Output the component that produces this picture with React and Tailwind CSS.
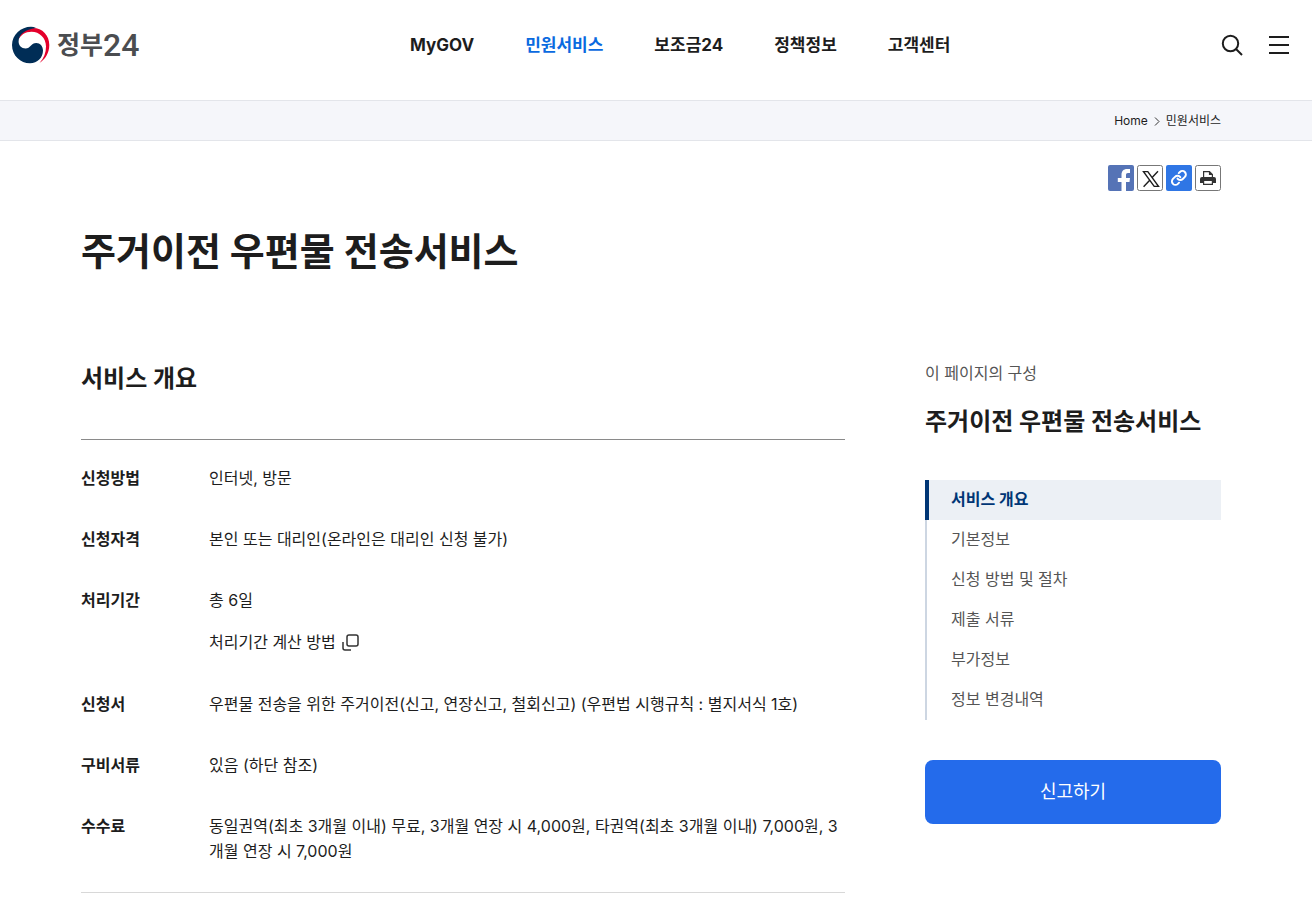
import React from 'react';

const NAV_ITEMS = [
  { label: 'MyGOV' },
  { label: '민원서비스', active: true },
  { label: '보조금24' },
  { label: '정책정보' },
  { label: '고객센터' },
];

const SECTIONS = ['서비스 개요', '기본정보', '신청 방법 및 절차', '제출 서류', '부가정보', '정보 변경내역'];

const OVERVIEW = [
  { term: '신청방법', desc: '인터넷, 방문' },
  { term: '신청자격', desc: '본인 또는 대리인(온라인은 대리인 신청 불가)' },
  { term: '처리기간', desc: '총 6일', link: '처리기간 계산 방법' },
  { term: '신청서', desc: '우편물 전송을 위한 주거이전(신고, 연장신고, 철회신고) (우편법 시행규칙 : 별지서식 1호)' },
  { term: '구비서류', desc: '있음 (하단 참조)' },
  { term: '수수료', desc: '동일권역(최초 3개월 이내) 무료, 3개월 연장 시 4,000원, 타권역(최초 3개월 이내) 7,000원, 3개월 연장 시 7,000원' },
];

const Logo = () => (
  <a href="#home" className="flex items-center gap-[7px]">
    <svg width="38" height="38" viewBox="0 0 38 38" aria-hidden="true">
      <path fill="#e4002b" d="M6 15C7.500 7 13.500 2 21 2C30.500 2 37.300 9.500 37.300 19C37.300 27 33 33.500 27.500 37C32 32 34 26.500 34 20.500C34 12 27.500 5.800 19.500 5.800C13.500 5.800 8 9 6 15Z" />
      <path fill="#002d56" d="M19 0.800C9 0.800 0 8.800 0 19C0 29.500 8.500 37.300 18 37.300C25.500 37.300 31 31.500 31 24.500C31 20 28 17 24.300 17C19 17 18.500 22.500 13.500 22.500C9.500 22.500 6.600 19.500 6.600 15.500C6.600 8.500 13 3.500 24 2C22.500 1.200 20.800 0.800 19 0.800Z" />
    </svg>
    <span className="flex items-center text-[#4b4d50]">
      <span className="text-[25px] leading-8 font-bold">정부</span>
      <span className="font-['Roboto'] text-[32px] leading-8 font-medium">24</span>
    </span>
  </a>
);

const Header = () => (
  <header className="flex h-[100px] items-start justify-between pt-[26px] pr-[23px] pl-3">
    <Logo />
    <nav className="flex h-[38px] items-center gap-[51px]">
      {NAV_ITEMS.map((item) => (
        <a
          key={item.label}
          href="#menu"
          className={`text-[17px] leading-6 font-bold ${item.active ? 'text-[#0a6ae0]' : 'text-[#1d1d1d]'}`}
        >
          {item.label}
        </a>
      ))}
    </nav>
    <div className="flex h-[38px] items-center gap-[26px]">
      <button type="button" aria-label="검색">
        <svg width="22" height="22" viewBox="0 0 22 22" fill="none" stroke="#1d1d1d" strokeWidth="2">
          <circle cx="9.500" cy="9.500" r="7.700" />
          <path d="M15 15L21 21" />
        </svg>
      </button>
      <button type="button" aria-label="전체메뉴" className="flex flex-col gap-1.5">
        <span className="h-0.5 w-5 bg-[#1d1d1d]" />
        <span className="h-0.5 w-5 bg-[#1d1d1d]" />
        <span className="h-0.5 w-5 bg-[#1d1d1d]" />
      </button>
    </div>
  </header>
);

const Breadcrumb = () => (
  <div className="border-y border-[#e3e5ea] bg-[#f5f6fa] pr-[10px]">
    <nav className="mx-auto flex h-[39px] max-w-[1140px] items-center justify-end gap-1.5 text-xs text-[#1d1d1d]">
      <a href="#home">Home</a>
      <svg width="6" height="10" viewBox="0 0 6 10" fill="none" stroke="#333" aria-hidden="true">
        <path d="M1 1.500L5 5.500L1 9.500" />
      </svg>
      <a href="#service">민원서비스</a>
    </nav>
  </div>
);

const ShareButtons = () => (
  <div className="flex justify-end gap-[3px]">
    <button type="button" aria-label="페이스북">
      <svg width="26" height="26" viewBox="0 0 26 26">
        <rect width="26" height="26" rx="2" fill="#5573b6" />
        <path fill="#fff" d="M13.500 26V17H9.800V13H13.500V10C13.500 6 15.700 4 19 4H22V8H20C18.500 8 18 8.700 18 10V13H22L21.500 17H18V26Z" />
      </svg>
    </button>
    <button type="button" aria-label="엑스">
      <svg width="26" height="26" viewBox="0 0 26 26" fill="none" stroke="#1d1d1d">
        <rect x="0.500" y="0.500" width="25" height="25" rx="2" stroke="#777" />
        <path strokeWidth="1.400" d="M6.500 6.600H10.800L21.500 21.400H17.200ZM21 6.200L14.900 12.800M12.700 15.200L6.600 21.800" />
      </svg>
    </button>
    <button type="button" aria-label="링크 복사">
      <svg width="26" height="26" viewBox="0 0 26 26" fill="none">
        <rect width="26" height="26" rx="2" fill="#2f76e5" />
        <g transform="translate(4.500 4.500) scale(0.700)" stroke="#fff" strokeWidth="2.800" strokeLinecap="round">
          <path d="M10 13a5 5 0 0 0 7.540.540l3-3a5 5 0 0 0-7.070-7.070l-1.720 1.710" />
          <path d="M14 11a5 5 0 0 0-7.540-.540l-3 3a5 5 0 0 0 7.070 7.070l1.710-1.710" />
        </g>
      </svg>
    </button>
    <button type="button" aria-label="인쇄">
      <svg width="26" height="26" viewBox="0 0 26 26" fill="none">
        <rect x="0.500" y="0.500" width="25" height="25" rx="2" stroke="#777" />
        <path fill="#333" d="M7 12H19A2 2 0 0 1 21 14V18H18V16H8V18H5V14A2 2 0 0 1 7 12Z" />
        <path stroke="#333" strokeWidth="1.200" d="M8.600 12V6.600H14.500L17.400 9.500V12M8.600 16V19.400H17.400V16M14.500 6.600V9.500H17.400" />
      </svg>
    </button>
  </div>
);

const Overview = () => (
  <section className="min-w-0 flex-1">
    <h2 className="text-2xl leading-9 font-bold">서비스 개요</h2>
    <dl className="mt-[42px] flex flex-col gap-9 border-t border-b border-t-[#8a8a8a] border-b-[#d8d8d8] pt-[26px] pb-7 text-base leading-[25px]">
      {OVERVIEW.map((row) => (
        <div key={row.term} className="flex">
          <dt className="w-32 shrink-0 font-bold">{row.term}</dt>
          <dd className="break-all">
            {row.desc}
            {row.link && (
              <a href="#period" className="mt-4 flex h-[27px] items-center gap-1.5">
                {row.link}
                <svg width="17" height="17" viewBox="0 0 17 17" fill="none" stroke="#333" strokeWidth="1.500" aria-hidden="true">
                  <rect x="5" y="1" width="11" height="11" rx="2" />
                  <path d="M1 8V14A2 2 0 0 0 3 16H9" />
                </svg>
              </a>
            )}
          </dd>
        </div>
      ))}
    </dl>
  </section>
);

const SideNav = () => (
  <aside className="w-[296px] shrink-0">
    <p className="text-base leading-6 text-[#555]">이 페이지의 구성</p>
    <h2 className="mt-[19px] text-2xl leading-9 font-bold">주거이전 우편물 전송서비스</h2>
    <ul className="mt-10">
      {SECTIONS.map((label, index) => (
        <li key={label}>
          <a
            href="#section"
            className={`flex h-10 items-center pb-0.5 text-base ${
              index === 0
                ? 'border-l-4 border-[#003675] bg-[#ecf0f5] pl-[22px] font-bold text-[#003675]'
                : 'border-l-2 border-[#cdd6e2] pl-6 text-[#555]'
            }`}
          >
            {label}
          </a>
        </li>
      ))}
    </ul>
    <button type="button" className="mt-10 h-16 w-full rounded-lg bg-[#246beb] text-lg text-white">
      신고하기
    </button>
  </aside>
);

const App = () => {
  return (
    <div className="bg-white font-['Inter','Noto_Sans_CJK_KR',sans-serif] text-[#1d1d1d]">
      <Header />
      <Breadcrumb />
      <main className="pt-6 pr-[10px]">
        <div className="mx-auto max-w-[1140px]">
          <ShareButtons />
          <h1 className="mt-8 text-[38px] leading-[56px] font-bold">주거이전 우편물 전송서비스</h1>
          <div className="mt-[82px] flex items-start gap-20">
            <Overview />
            <SideNav />
          </div>
        </div>
      </main>
    </div>
  );
};

export default App;
